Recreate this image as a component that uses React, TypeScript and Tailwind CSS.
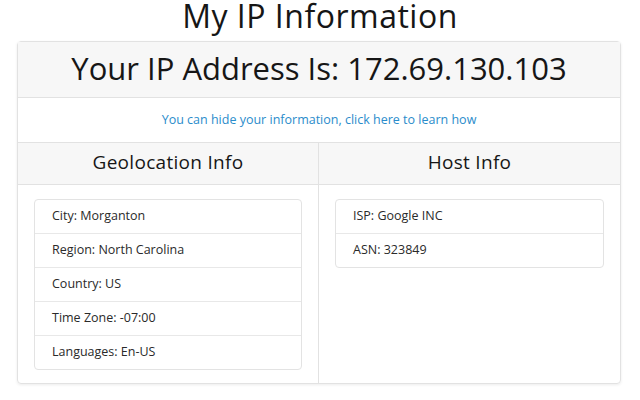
import React from 'react'

const geo = [
  'City: Morganton',
  'Region: North Carolina',
  'Country: US',
  'Time Zone: -07:00',
  'Languages: En-US',
]

const host = ['ISP: Google INC', 'ASN: 323849']

function InfoList({ items }: { items: string[] }) {
  return (
    <ul className="rounded border border-[#e3e3e3] bg-white">
      {items.map((item, i) => (
        <li
          key={item}
          className={`flex items-center px-[17px] text-[12.5px] text-[#2a2a2a] ${
            i > 0 ? 'h-[34px] border-t border-[#e8e8e8]' : 'h-[33px]'
          }`}
        >
          {item}
        </li>
      ))}
    </ul>
  )
}

export default function App() {
  return (
    <div className="h-[400px] w-[640px] overflow-hidden bg-white font-['Open_Sans',sans-serif] text-[#161616]">
      <h1 className="h-[41px] pt-[1px] text-center text-[32px] leading-[30px] tracking-[0.5px]">
        My IP Information
      </h1>
      <div className="mx-[17px] w-[604px] rounded border border-[#e2e2e2] shadow-[0_1px_3px_rgba(0,0,0,0.08)]">
        <div className="flex h-[56px] items-center justify-center border-b border-[#e2e2e2] bg-[#f7f7f7] pb-[3px] text-[31px] leading-none">
          Your IP Address Is: 172.69.130.103
        </div>
        <div className="flex h-[44px] items-center justify-center">
          <a className="text-[12.5px] text-[#2a8ccb]">
            You can hide your information, click here to learn how
          </a>
        </div>
        <div className="grid grid-cols-2 border-t border-[#e2e2e2]">
          <div className="border-r border-[#e2e2e2]">
            <div className="flex h-[42px] items-center justify-center border-b border-[#e2e2e2] bg-[#f7f7f7] pb-[2px] text-[19px] tracking-[0.3px]">
              Geolocation Info
            </div>
            <div className="px-4 pt-[14px] pb-[13px]">
              <InfoList items={geo} />
            </div>
          </div>
          <div>
            <div className="flex h-[42px] items-center justify-center border-b border-[#e2e2e2] bg-[#f7f7f7] pb-[2px] text-[19px] tracking-[0.3px]">
              Host Info
            </div>
            <div className="px-4 pt-[14px] pb-[13px]">
              <InfoList items={host} />
            </div>
          </div>
        </div>
      </div>
    </div>
  )
}
